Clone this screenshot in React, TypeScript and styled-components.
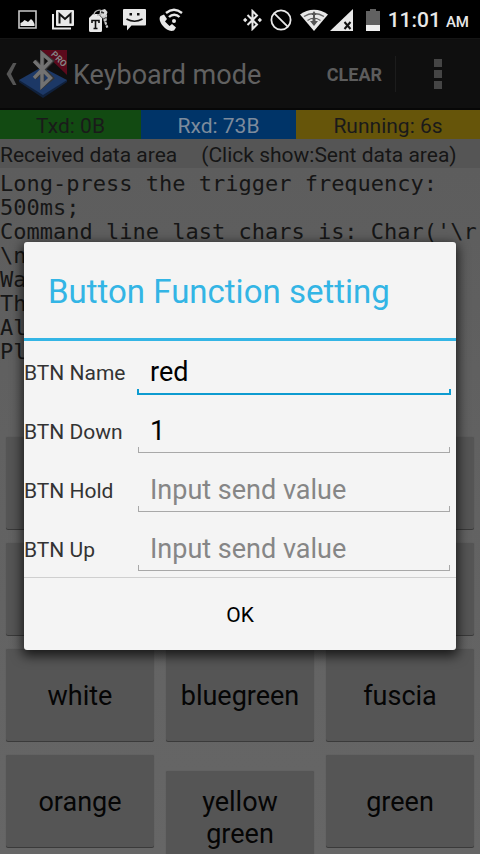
import React from 'react';
import styled, { createGlobalStyle, css } from 'styled-components';

const GlobalStyle = createGlobalStyle`
  *, *::before, *::after { box-sizing: border-box; }
  html, body, #root { height: 100%; }
  body {
    margin: 0;
    background: #636363;
    font-family: Roboto, "Noto Sans", sans-serif;
    overflow: hidden;
  }
  button, input { font-family: inherit; }
`;

const Screen = styled.div`
  display: flex;
  flex-direction: column;
  height: 100vh;
  overflow: hidden;
`;

const StatusBar = styled.header`
  display: flex;
  align-items: center;
  justify-content: space-between;
  flex: none;
  height: 38px;
  padding: 1px 11px 0 18px;
  background: #000;
  color: #e8e8e8;
`;

const StatusGroup = styled.div<{ $gap: number }>`
  display: flex;
  align-items: center;
  gap: ${(p) => p.$gap}px;
`;

const Clock = styled.time`
  padding-top: 3px;
  font-size: 21px;
  line-height: 34px;
  font-weight: 500;
  white-space: nowrap;
`;

const Meridiem = styled.span`
  margin-left: 5px;
  font-size: 15px;
`;

const Window = styled.div`
  position: relative;
  display: flex;
  flex-direction: column;
  flex: 1;
  min-height: 0;
  overflow: hidden;
`;

const ActionBar = styled.div`
  display: flex;
  align-items: center;
  flex: none;
  height: 72px;
  padding-left: 6px;
  background: #0f0f0f;
  border-top: 1px solid #151515;
  border-bottom: 2px solid #070707;
  color: #616161;
`;

const UpButton = styled.button`
  display: flex;
  align-items: center;
  gap: 2px;
  padding: 0;
  border: 0;
  background: none;
  color: inherit;
`;

const Title = styled.h1`
  flex: 1;
  margin: 0 0 0 6px;
  padding-top: 2px;
  font-size: 27px;
  line-height: 32px;
  font-weight: 400;
  white-space: nowrap;
`;

const ClearButton = styled.button`
  height: 36px;
  padding: 2px 13px 0;
  border: 0;
  border-right: 1px solid #1c1c1c;
  background: none;
  color: #5c5c5c;
  font-size: 18px;
  font-weight: 700;
`;

const MenuButton = styled.button`
  display: grid;
  place-items: center;
  width: 84px;
  height: 60px;
  padding: 0;
  border: 0;
  background: none;
`;

const Stats = styled.div`
  display: grid;
  grid-template-columns: 141fr 155fr 184fr;
  flex: none;
`;

const Stat = styled.div<{ $bg: string; $light?: boolean }>`
  height: 29px;
  padding-top: 2px;
  background: ${(p) => p.$bg};
  color: ${(p) => (p.$light ? '#7d8b9c' : '#1a1a1a')};
  font-size: 21px;
  line-height: 28px;
  text-align: center;
  white-space: nowrap;
`;

const AreaButton = styled.button`
  display: flex;
  flex: none;
  gap: 24px;
  height: 29px;
  padding: 2px 0 0;
  border: 0;
  background: #555;
  color: #161616;
  font-size: 21px;
  line-height: 28px;
  white-space: nowrap;
`;

const Log = styled.pre`
  flex: 1;
  min-height: 0;
  margin: 0;
  padding-top: 4px;
  overflow: hidden;
  background: linear-gradient(#5d5d5d, #616161);
  color: #161616;
  font-family: "DejaVu Sans Mono", monospace;
  font-size: 22px;
  line-height: 24px;
`;

const Keys = styled.div`
  display: flex;
  flex-direction: column;
  flex: none;
  gap: 14px;
  height: 417px;
  padding: 0 6px;
  background: linear-gradient(#616161, #666);
`;

const KeyRow = styled.div`
  display: flex;
  flex: none;
  align-items: baseline;
  gap: 12px;
  height: 92px;
`;

const Key = styled.button`
  flex: 1;
  min-width: 0;
  height: 92px;
  padding: 2px 8px 0;
  border: 0;
  border-radius: 2px;
  background: #555;
  box-shadow: 0 1px 0 #3a3a3a, 0 0 1px #4c4c4c;
  color: #050505;
  font-size: 27px;
  line-height: 32px;
`;

const Scrim = styled.div`
  position: absolute;
  inset: 0;
  display: flex;
  align-items: center;
  padding: 0 24px;
`;

const Dialog = styled.form`
  flex: 1;
  border-radius: 3px;
  background: #f4f4f4;
  box-shadow: 0 4px 12px 2px rgba(0, 0, 0, 0.7);
`;

const DialogTitle = styled.h2`
  margin: 0;
  padding: 4px 24px 0;
  border-bottom: 3px solid #33b5e5;
  color: #33b5e5;
  font-size: 33px;
  line-height: 92px;
  font-weight: 400;
  white-space: nowrap;
`;

const Fields = styled.div`
  border-bottom: 1px solid #cfcfcf;
`;

const Field = styled.label`
  display: grid;
  grid-template-columns: 113px 1fr;
  height: 59px;
  padding-right: 5px;
  color: #333;
  font-size: 21px;
  line-height: 64px;
  white-space: nowrap;
`;

const Underlined = styled.span<{ $active?: boolean }>`
  display: flex;
  position: relative;
  align-items: center;
  height: 59px;
  padding-top: 2px;

  &::after {
    content: '';
    position: absolute;
    height: 6px;
    pointer-events: none;
    ${(p) =>
      p.$active
        ? css`
            left: 0;
            right: 0;
            bottom: 5px;
            border: 2px solid #0d9bd0;
          `
        : css`
            left: 1px;
            right: 1px;
            bottom: 6px;
            border: 1px solid #a8a8a8;
          `}
    border-top: 0;
  }
`;

const TextInput = styled.input`
  width: 100%;
  height: 40px;
  padding: 0 13px;
  border: 0;
  outline: 0;
  background: transparent;
  color: #000;
  font-size: 27px;

  &::placeholder { color: #868686; opacity: 1; }
`;

const OkButton = styled.button`
  display: block;
  width: 100%;
  height: 72px;
  padding: 2px 0 0;
  border: 0;
  background: none;
  color: #000;
  font-size: 21px;
`;

const PictureIcon = () => (
  <svg width="20" height="20" viewBox="0 0 20 20" aria-hidden="true">
    <path d="M1 1h17v17H1z" fill="none" stroke="#c8c8c8" strokeWidth="1.600" />
    <path d="M2.500 16v-3l2-1 2-2 2 1 1.500 1 3-3 2 2 1.500 3v2z" fill="#e8e8e8" />
  </svg>
);

const MailStackIcon = () => (
  <svg width="23" height="20" viewBox="0 0 23 20" aria-hidden="true">
    <path d="M2 4v14.500h18" fill="none" stroke="#e8e8e8" strokeWidth="2" />
    <rect x="5" y="0" width="18" height="16" rx="1" fill="#e8e8e8" />
    <path d="M8.500 13.500V4L14 9l5.500-5v9.500" fill="none" stroke="#111" strokeWidth="2" />
  </svg>
);

const TagKeyIcon = () => (
  <svg width="22" height="26" viewBox="0 0 22 26" aria-hidden="true">
    <path d="M2 11l4-4h5l4 4v12.500a1.500 1.500 0 0 1-1.500 1.500h-10A1.500 1.500 0 0 1 2 23.500z" fill="#e8e8e8" />
    <path d="M5 16v-2.500h7V16M8.500 13.500V21M6.500 21.500h4" fill="none" stroke="#111" strokeWidth="1.600" />
    <path d="M13 3.500l5-1.500 2.500 3-1.500 5-4 .500-2.500-3z" fill="#dcdcdc" />
    <path d="M16 9l4.500 12M19 8l-.500 8" stroke="#c8c8c8" strokeWidth="2.200" strokeDasharray="2.500 0.800" />
    <path d="M7 8c0-4 5-6 8-4 1 3-2 4-5 4" fill="none" stroke="#b0b0b0" strokeWidth="1.300" />
    <path d="M14 5l3 1" stroke="#333" strokeWidth="1.400" />
  </svg>
);

const SmileMessageIcon = () => (
  <svg width="24" height="23" viewBox="0 0 24 23" aria-hidden="true">
    <path d="M2 1h21a1 1 0 0 1 1 1v14.500a1 1 0 0 1-1 1H9.500L5 22.500v-5H2a1 1 0 0 1-1-1V2a1 1 0 0 1 1-1z" fill="#e8e8e8" />
    <path d="M7.500 5H10v2.500H7.500zM15 5h2.500v2.500H15z" fill="#111" />
    <path d="M4.500 11q8 4.500 16 0" fill="none" stroke="#111" strokeWidth="1.700" />
  </svg>
);

const WifiCallIcon = () => (
  <svg width="24" height="24" viewBox="0 0 24 24" aria-hidden="true">
    <path d="M1.500 8l3.500-1.500 3 4.500-2 2.500 4.500 4.500 2.500-2 4 3.500-2 3c-4 1.500-8-1-11-4.500S-.500 10.500 1.500 8z" fill="#e8e8e8" />
    <path d="M7 5c5-4 11-4 16 0M10 9c3-3 7.500-3 10.500 0" fill="none" stroke="#e8e8e8" strokeWidth="2.400" />
    <circle cx="15" cy="13" r="2" fill="#e8e8e8" />
  </svg>
);

const BluetoothIcon = () => (
  <svg width="19" height="22" viewBox="0 0 19 22" aria-hidden="true">
    <path d="M4.500 6l9.500 9.500-4.500 4.500V2L14 6.500 4.500 16" fill="none" stroke="#e8e8e8" strokeWidth="2" />
    <path d="M2.200 8.800L4.400 11l-2.200 2.200L0 11zM16.800 8.800L19 11l-2.200 2.200-2.200-2.200z" fill="#e8e8e8" />
  </svg>
);

const BlockedIcon = () => (
  <svg width="22" height="22" viewBox="0 0 22 22" fill="none" stroke="#e8e8e8" strokeWidth="1.800" aria-hidden="true">
    <circle cx="11" cy="11" r="9.600" />
    <path d="M4.300 4.300l13.400 13.400" />
  </svg>
);

const SignalGroup = styled.span`
  display: flex;
  gap: 2px;
  margin-right: 5px;
`;

const WifiIcon = () => (
  <svg width="28" height="22" viewBox="0 0 28 22" aria-hidden="true">
    <path d="M0 5.500C8-1 20-1 28 5.500L14 22z" fill="#e8e8e8" />
    <path d="M4 7.500c6-4 14-4 20 0M7.500 11.500c4-3 9-3 13 0" fill="none" stroke="#666" strokeWidth="1.300" />
    <path d="M14 2l2.500 4H15v3l3 1h-2.500v2H18l-4 5-4-5h2.500v-2H10l3-1V6h-1.500z" fill="#555" />
  </svg>
);

const SignalIcon = () => (
  <svg width="23" height="22" viewBox="0 0 23 22" aria-hidden="true">
    <path d="M23 0v22H0z" fill="#e8e8e8" />
    <path d="M14.500 13l6 7M20.500 13l-6 7" stroke="#111" strokeWidth="2" />
  </svg>
);

const BatteryIcon = () => (
  <svg width="14" height="24" viewBox="0 0 14 24" aria-hidden="true">
    <path d="M4 1h6v2h4v14H0V3h4z" fill="#616161" />
    <path d="M0 17h14v6H0z" fill="#f0f0f0" />
  </svg>
);

const BackChevron = () => (
  <svg width="11" height="22" viewBox="0 0 11 22" aria-hidden="true">
    <path d="M7 0h3.500L5 11l5.500 11H7L.500 11z" fill="#555" />
  </svg>
);

const AppLogo = () => (
  <svg width="48" height="48" viewBox="0 0 48 48" aria-hidden="true">
    <path d="M0 30v2l24 16 24-16v-2z" fill="#10213c" />
    <path d="M0 30l23-13 25 13-24 15z" fill="#1c3866" />
    <path d="M22 0h26v25z" fill="#5b0a1c" />
    <path d="M16 11l17 17-9.500 8V4l9.500 7-17 17" fill="none" stroke="#343434" strokeWidth="4" />
    <path d="M15 11l16.500 17-8.500 8V3.500l8.500 7.500L15 28" fill="none" stroke="#727272" strokeWidth="3.400" />
    <text x="40" y="12" transform="rotate(45 40 9)" textAnchor="middle" fontFamily="Roboto, sans-serif" fontSize="9" fontWeight="700" fill="#858585">PRO</text>
  </svg>
);

const OverflowIcon = () => (
  <svg width="8" height="30" viewBox="0 0 8 30" fill="#454545" aria-hidden="true">
    <path d="M0 0h8v8H0zM0 11h8v8H0zM0 22h8v8H0z" />
  </svg>
);

const logText = [
  'Long-press the trigger frequency:',
  '500ms;',
  "Command line last chars is: Char('\\r",
  '\\n',
  'Wa',
  'Th',
  'Al',
  'Pl',
].join('\n');

const keyRows = [
  ['', '', ''],
  ['', '', ''],
  ['white', 'bluegreen', 'fuscia'],
  ['orange', 'yellow green', 'green'],
];

const fields = [
  { label: 'BTN Name', value: 'red', active: true },
  { label: 'BTN Down', value: '1' },
  { label: 'BTN Hold', value: '' },
  { label: 'BTN Up', value: '' },
];

export default function App() {
  return (
    <Screen>
      <GlobalStyle />
      <StatusBar>
        <StatusGroup $gap={13}>
          <PictureIcon />
          <MailStackIcon />
          <TagKeyIcon />
          <SmileMessageIcon />
          <WifiCallIcon />
        </StatusGroup>
        <StatusGroup $gap={8}>
          <BluetoothIcon />
          <BlockedIcon />
          <SignalGroup>
            <WifiIcon />
            <SignalIcon />
          </SignalGroup>
          <BatteryIcon />
          <Clock>
            {' '}11:01<Meridiem>AM</Meridiem>
          </Clock>
        </StatusGroup>
      </StatusBar>
      <Window>
        <ActionBar>
          <UpButton type="button" aria-label="Navigate up">
            <BackChevron />
            <AppLogo />
          </UpButton>
          <Title>Keyboard mode</Title>
          <ClearButton type="button">CLEAR</ClearButton>
          <MenuButton type="button" aria-label="More options">
            <OverflowIcon />
          </MenuButton>
        </ActionBar>
        <Stats>
          <Stat $bg="#124a12">Txd: 0B</Stat>
          <Stat $bg="#003468" $light>Rxd: 73B</Stat>
          <Stat $bg="#66550a">Running: 6s</Stat>
        </Stats>
        <AreaButton type="button">
          <span>Received data area</span>
          <span>(Click show:Sent data area)</span>
        </AreaButton>
        <Log>{logText}</Log>
        <Keys>
          {keyRows.map((row, r) => (
            <KeyRow key={r}>
              {row.map((name, c) => (
                <Key type="button" key={c} aria-label={name || 'Unnamed key'}>
                  {name || '\u00a0'}
                </Key>
              ))}
            </KeyRow>
          ))}
        </Keys>
        <Scrim>
          <Dialog role="dialog" aria-labelledby="dialog-title" onSubmit={(e) => e.preventDefault()}>
            <DialogTitle id="dialog-title">Button Function setting</DialogTitle>
            <Fields>
              {fields.map((f) => (
                <Field key={f.label}>
                  {f.label}
                  <Underlined $active={f.active}>
                    <TextInput type="text" defaultValue={f.value} placeholder="Input send value" />
                  </Underlined>
                </Field>
              ))}
            </Fields>
            <OkButton type="submit">OK</OkButton>
          </Dialog>
        </Scrim>
      </Window>
    </Screen>
  );
}
